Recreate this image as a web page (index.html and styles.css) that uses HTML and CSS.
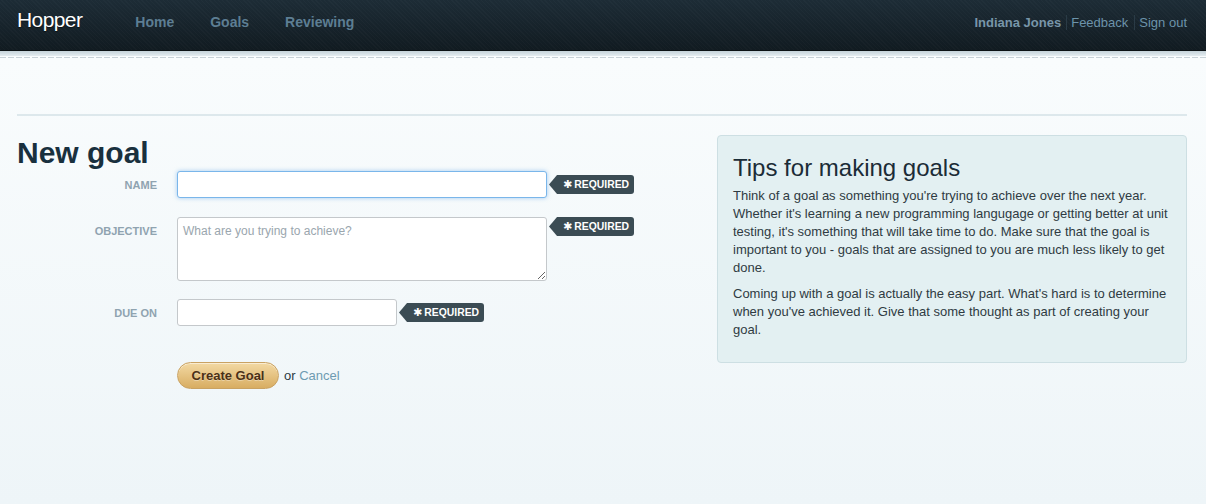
FILE: index.html
```html
<!DOCTYPE html>
<html lang="en">
<head>
<meta charset="utf-8">
<title>Hopper - New goal</title>
<link rel="stylesheet" href="styles.css">
</head>
<body>
<header class="topbar">
  <a class="brand" href="#">Hopper</a>
  <nav class="nav">
    <a href="#">Home</a>
    <a href="#">Goals</a>
    <a href="#">Reviewing</a>
  </nav>
  <div class="user-links">
    <span class="user-name">Indiana Jones</span>
    <a class="sep" href="#">Feedback</a>
    <a class="sep" href="#">Sign out</a>
  </div>
</header>
<div class="subbar"></div>
<div class="dashline"></div>
<main class="page">
  <div class="rule"></div>
  <div class="content">
    <section class="main-col">
      <h1 class="title">New goal</h1>
      <form class="goal-form">
        <div class="row row-center row-first">
          <label class="label" for="name">Name</label>
          <input class="field field-focus w-wide" id="name" type="text">
          <span class="req"><span class="star">✱</span>REQUIRED</span>
        </div>
        <div class="row row-top">
          <label class="label label-top" for="objective">Objective</label>
          <textarea class="field area w-wide" id="objective" placeholder="What are you trying to achieve?"></textarea>
          <span class="req"><span class="star">✱</span>REQUIRED</span>
        </div>
        <div class="row row-center">
          <label class="label" for="due">Due on</label>
          <input class="field w-short" id="due" type="text">
          <span class="req"><span class="star">✱</span>REQUIRED</span>
        </div>
        <div class="row actions">
          <span class="label"></span>
          <button class="btn" type="button">Create Goal</button>
          <span class="or">or <a href="#">Cancel</a></span>
        </div>
      </form>
    </section>
    <aside class="tips">
      <h2>Tips for making goals</h2>
      <p>Think of a goal as something you're trying to achieve over the next year. Whether it's learning a new programming langugage or getting better at unit testing, it's something that will take time to do. Make sure that the goal is important to you - goals that are assigned to you are much less likely to get done.</p>
      <p>Coming up with a goal is actually the easy part. What's hard is to determine when you've achieved it. Give that some thought as part of creating your goal.</p>
    </aside>
  </div>
</main>
</body>
</html>
```
FILE: styles.css
```css
* { box-sizing: border-box; }
html, body { margin: 0; padding: 0; }
body {
  font-family: "Liberation Sans", Arial, sans-serif;
  font-size: 13px;
  color: #2e3a41;
  background: linear-gradient(#f9fcfd 60px, #eef5f8 504px);
  min-height: 504px;
}
a { text-decoration: none; }

.topbar {
  height: 51px;
  display: flex;
  align-items: baseline;
  padding: 7px 19px 0 17px;
  background-color: #18252d;
  background-image:
    repeating-linear-gradient(45deg, rgba(255,255,255,0.018) 0 1px, transparent 1px 3px),
    linear-gradient(#1d2c36, #111b21);
  border-bottom: 1px solid #0b1114;
}
.brand {
  font-size: 21px;
  line-height: 26px;
  letter-spacing: -0.6px;
  color: #ffffff;
  text-shadow: 0 1px 1px rgba(0,0,0,0.5);
}
.nav { display: flex; margin-left: 35px; }
.nav a {
  font-size: 14px;
  font-weight: bold;
  color: #5d7e93;
  padding: 0 18px;
}
.user-links {
  margin-left: auto;
  display: flex;
  align-items: baseline;
  font-size: 13px;
}
.user-name { font-weight: bold; color: #7896a9; padding-right: 5px; }
.user-links a { color: #6c93aa; }
.user-links .sep { border-left: 1px solid #2a3b46; padding-left: 4px; }
.user-links .sep + .sep { margin-left: 6px; }

.subbar {
  height: 5px;
  background: linear-gradient(#c4d2d9, #e4ecf0);
}
.dashline {
  height: 1px;
  margin-top: 1px;
  background: repeating-linear-gradient(90deg, #c8d2d8 0 6px, transparent 6px 8px);
}

.page { padding: 0 19px 0 17px; }
.rule {
  height: 2px;
  background: #dde8ec;
  margin-top: 56px;
}
.content {
  display: flex;
  align-items: flex-start;
  margin-top: 19px;
}
.main-col { flex: 1; }
.title {
  margin: 0;
  font-size: 30px;
  line-height: 36px;
  font-weight: bold;
  color: #19303e;
}

.goal-form { display: flex; flex-direction: column; }
.row { display: flex; margin-bottom: 18px; }
.row-first { margin-bottom: 19px; }
.row-center { align-items: center; }
.row-top { align-items: flex-start; }
.label {
  width: 160px;
  flex: none;
  padding-right: 20px;
  text-align: right;
  font-size: 11px;
  font-weight: bold;
  text-transform: uppercase;
  color: #8fa3b0;
}
.label-top { padding-top: 8px; }
.field {
  display: block;
  height: 27px;
  border: 1px solid #c4c8cb;
  border-radius: 3px;
  background: #fff;
  font-family: "Liberation Sans", Arial, sans-serif;
  font-size: 12px;
  padding: 4px 5px;
  margin: 0;
  outline: none;
}
.field-focus {
  border-color: #7ab6ea;
  box-shadow: 0 0 4px rgba(90, 160, 230, 0.55);
}
.w-wide { width: 370px; }
.w-short { width: 220px; }
.area { height: 64px; resize: vertical; padding-top: 6px; }
.area::placeholder { color: #9aa6ae; }

.req {
  display: inline-flex;
  align-items: center;
  height: 19px;
  margin-left: 2px;
  padding: 0 5px 0 14px;
  background: #3b4c54;
  color: #fff;
  font-size: 10.4px;
  font-weight: bold;
  border-radius: 0 3px 3px 0;
  clip-path: polygon(0 50%, 8px 0, 100% 0, 100% 100%, 8px 100%);
}
.star {
  font-family: "DejaVu Sans", sans-serif;
  font-size: 11px;
  margin-right: 2px;
}

.actions { margin-top: 18px; align-items: center; }
.btn {
  height: 27px;
  width: 102px;
  padding: 0;
  border: 1px solid #c9a262;
  border-radius: 14px;
  background: linear-gradient(#f3d9a3, #d8ad62);
  box-shadow: inset 0 1px 0 rgba(255,255,255,0.5);
  font-family: "Liberation Sans", Arial, sans-serif;
  font-size: 13px;
  font-weight: bold;
  color: #4b3016;
  text-shadow: 0 1px 0 rgba(255,255,255,0.35);
}
.or { margin-left: 5px; color: #2c3a43; }
.or a { color: #6e9bb1; }

.tips {
  width: 470px;
  flex: none;
  background: #e3f0f2;
  border: 1px solid #cddfe3;
  border-radius: 4px;
  padding: 18px 15px 15px;
}
.tips h2 {
  margin: 0 0 5px;
  font-size: 24px;
  line-height: 28px;
  font-weight: normal;
  color: #1b2c37;
}
.tips p {
  margin: 0 0 8px;
  font-size: 13px;
  line-height: 18px;
  color: #2f3b42;
}
```
